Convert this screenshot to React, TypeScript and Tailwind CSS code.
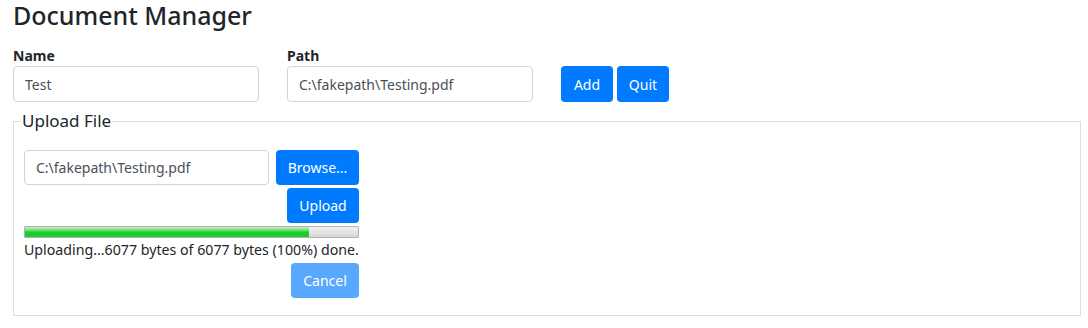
const font = { fontFamily: '"Noto Sans", "Open Sans", sans-serif' };

const Field = ({ label, value }: { label: string; value: string }) => (
  <div className="flex flex-col w-[246px]">
    <label className="text-[14px] font-bold leading-[19px] mb-[1px] text-[#212529]">{label}</label>
    <input
      readOnly
      value={value}
      className="h-[36px] rounded-[4px] border border-[#ced4da] px-[11px] text-[14px] text-[#495057] outline-none bg-white"
    />
  </div>
);

const Btn = ({ children, className = "" }: { children: React.ReactNode; className?: string }) => (
  <button
    className={
      "h-[35px] rounded-[4px] bg-[#007bff] text-white text-[14px] px-[11px] flex items-center justify-center " + className
    }
  >
    {children}
  </button>
);

const App = () => {
  return (
    <div className="w-[1088px] h-[328px] bg-white text-[#212529] px-[13px]" style={font}>
      <h1 className="text-[25px] font-medium leading-[30px] mb-[16px]">Document Manager</h1>

      <div className="flex items-end">
        <Field label="Name" value="Test" />
        <div className="w-[28px]" />
        <Field label="Path" value="C:\fakepath\Testing.pdf" />
        <div className="w-[28px]" />
        <div className="flex gap-[4px]">
          <Btn className="w-[52px] h-[36px]">Add</Btn>
          <Btn className="w-[52px] h-[36px]">Quit</Btn>
        </div>
      </div>

      <fieldset className="mt-[9px] border border-[#dedede] w-[1068px] h-[205px] px-[10px] pb-[10px]">
        <legend className="text-[17px] leading-[20px] ml-[-3px] px-[1px]">Upload File</legend>
        <div className="w-[335px] flex flex-col items-end mt-[19px]">
          <div className="flex w-full gap-[7px]">
            <input
              readOnly
              value="C:\fakepath\Testing.pdf"
              className="w-[245px] h-[35px] rounded-[4px] border border-[#ced4da] px-[11px] text-[14px] text-[#495057] outline-none"
            />
            <Btn className="w-[83px]">Browse...</Btn>
          </div>
          <Btn className="mt-[3px] w-[72px]">Upload</Btn>
          <div className="mt-[3px] w-full h-[12px] border border-[#b2b2b2] bg-gradient-to-b from-[#f2f2f2] to-[#d6d6d6] rounded-[1px] overflow-hidden">
            <div
              className="h-full bg-gradient-to-b from-[#c4f5c4] via-[#16d02a] to-[#22c832]"
              style={{ width: "85.3%" }}
            />
          </div>
          <div className="w-full text-[14.2px] leading-[20px] mt-[2px] whitespace-nowrap">
            Uploading...6077 bytes of 6077 bytes (100%) done.
          </div>
          <Btn className="mt-[3px] w-[68px] opacity-65">Cancel</Btn>
        </div>
      </fieldset>
    </div>
  );
};

export default App;
